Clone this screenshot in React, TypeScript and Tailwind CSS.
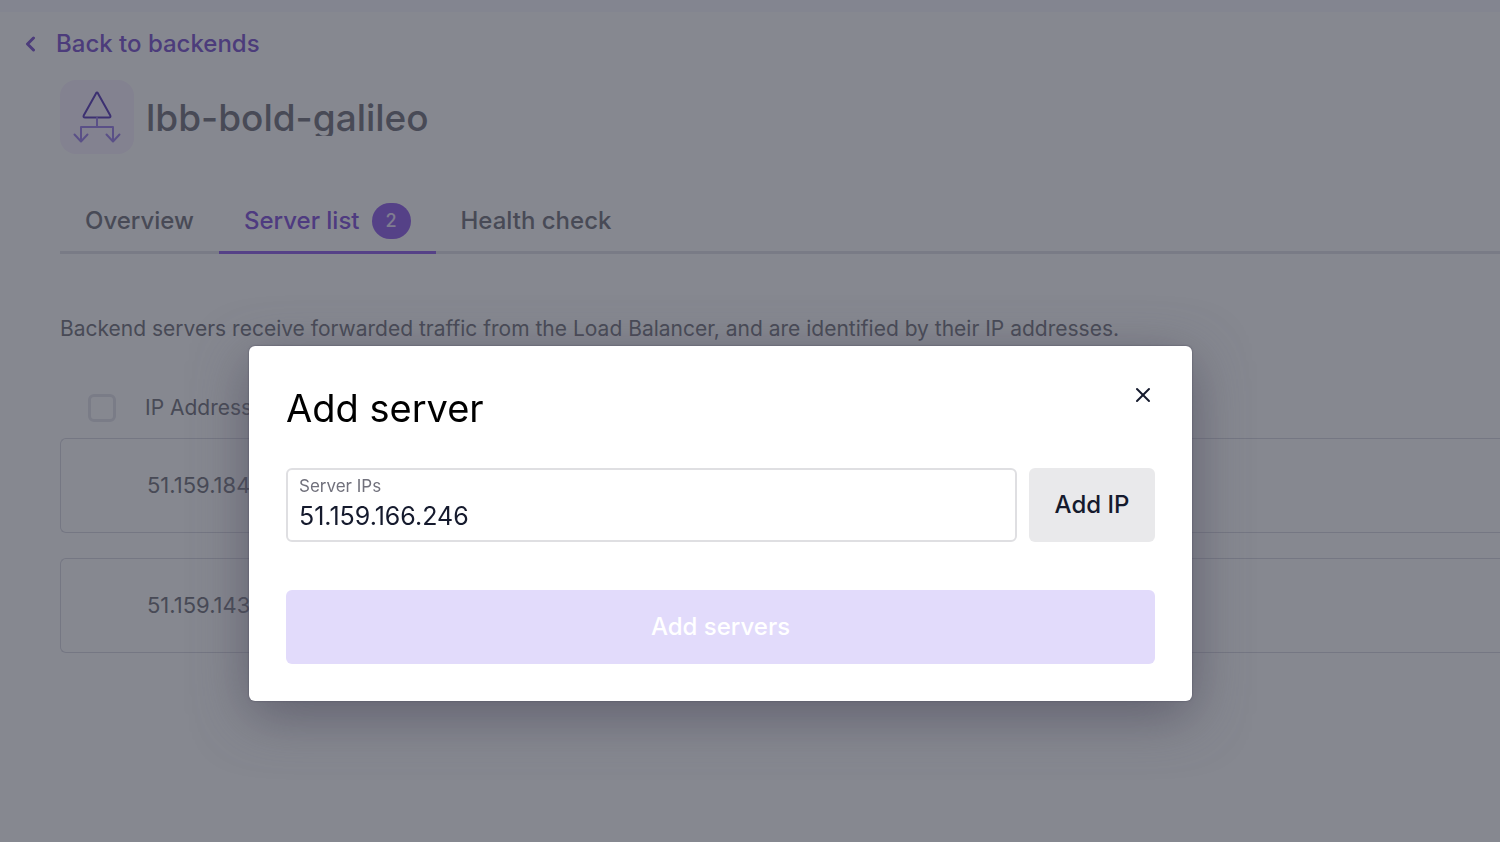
import { useState } from 'react'
import { X } from 'lucide-react'

const TABS = [
  { id: 'overview', label: 'Overview' },
  { id: 'servers', label: 'Server list', count: 2 },
  { id: 'health', label: 'Health check' },
]

const SERVERS = ['51.159.184.12', '51.159.143.87']

function LoadBalancerIcon() {
  return (
    <svg width="48" height="54" viewBox="0 0 48 54" fill="none" strokeLinecap="round" strokeLinejoin="round">
      <path d="M23 3.400 Q24 1.800 25 3.400 L37.300 25.500 Q38 27.500 36 27.500 H12 Q10 27.500 10.700 25.500 Z" stroke="#6a4fc0" strokeWidth="2" />
      <path d="M24 28 V37 M8 51 V37 H40 V51 M1.500 44.500 L8 51.500 L14.500 44.500 M33.500 44.500 L40 51.500 L46.500 44.500" stroke="#a78fec" strokeWidth="2" />
    </svg>
  )
}

function AddServerDialog({ onClose }: { onClose: () => void }) {
  const [ip, setIp] = useState('51.159.166.246')

  return (
    <div className="fixed inset-0 overflow-hidden bg-[#0d1121]/50 pt-[346px] pr-[59px]">
      <div
        role="dialog"
        aria-labelledby="add-server-title"
        className="mx-auto w-full max-w-[943px] rounded-md bg-white p-[37px] shadow-[0_14px_54px_rgba(80,78,96,0.7),0_0_2px_rgba(40,35,60,0.6)]"
      >
        <div className="flex items-start justify-between">
          <h2 id="add-server-title" className="pt-0.5 text-[38px] leading-[46px] text-black">Add server</h2>
          <button aria-label="Close" onClick={onClose} className="text-[#151a2d]">
            <X size={24} strokeWidth={2} />
          </button>
        </div>

        <div className="mt-[37px] flex gap-3">
          <div className="flex h-[74px] flex-1 flex-col rounded-md border-2 border-[#dfdfe2] px-[11px] pt-1">
            <label htmlFor="server-ips" className="text-[17px] leading-6 text-[#71717c]">Server IPs</label>
            <input
              id="server-ips"
              value={ip}
              onChange={e => setIp(e.target.value)}
              className="w-full text-[25px] leading-9 text-[#151a2d] outline-none"
            />
          </div>
          <button className="w-[126px] rounded-md bg-[#e9e9eb] text-2xl font-medium text-[#151a2d]">Add IP</button>
        </div>

        <button disabled className="mt-12 h-[74px] w-full rounded-md bg-[#e2dbfb] text-2xl font-medium text-white">
          Add servers
        </button>
      </div>
    </div>
  )
}

export default function App() {
  const [tab, setTab] = useState('servers')
  const [open, setOpen] = useState(true)

  return (
    <div className="min-h-screen overflow-hidden bg-white font-['Inter',sans-serif] text-[#83838b]">
      <div className="h-3 bg-[#f9f8ff]" />

      <a href="#backends" className="ml-6 mt-3 inline-flex h-10 items-center gap-5 text-2xl font-medium text-[#8a66d4]">
        <svg width="12" height="16" viewBox="0 0 12 16" fill="none" stroke="currentColor" strokeWidth="3" strokeLinecap="round" strokeLinejoin="round">
          <path d="M9.500 2 L3.500 8 L9.500 14" />
        </svg>
        Back to backends
      </a>

      <main className="pl-[60px]">
        <div className="mt-4 flex items-center gap-3">
          <div className="flex size-[74px] items-center justify-center rounded-2xl bg-[#f9f2ff]">
            <LoadBalancerIcon />
          </div>
          <h1 className="overflow-hidden text-[37px] font-medium leading-[37px]">lbb-bold-galileo</h1>
        </div>

        {/* Tabs */}
        <nav className="mt-9 flex border-b-[3px] border-[#e4e4ea]">
          {TABS.map(t => (
            <button
              key={t.id}
              onClick={() => setTab(t.id)}
              className={`-mb-[3px] flex h-16 items-center gap-3 border-b-[3px] px-[25px] text-2xl font-medium ${
                tab === t.id ? 'border-[#9d70ec] text-[#8f64de]' : 'border-transparent'
              }`}
            >
              {t.label}
              {t.count && (
                <span className="flex h-9 w-[39px] items-center justify-center rounded-full bg-[#9d70ec] text-lg text-[#f0e8ff]">
                  {t.count}
                </span>
              )}
            </button>
          ))}
        </nav>

        <p className="mt-[59px] whitespace-nowrap text-[21px] leading-8">
          Backend servers receive forwarded traffic from the Load Balancer, and are identified by their IP addresses.
        </p>

        {/* Server table */}
        <table className="mt-8 block text-[21px]">
          <thead className="block">
            <tr className="flex h-[61px] items-center">
              <th className="w-[85px] pl-7 text-left">
                <input
                  type="checkbox"
                  aria-label="Select all servers"
                  className="block size-7 appearance-none rounded-md border-[3px] border-[#e6e6ec]"
                />
              </th>
              <th className="font-normal">IP Address</th>
            </tr>
          </thead>
          <tbody className="flex flex-col gap-[25px] text-[22px]">
            {SERVERS.map(server => (
              <tr key={server} className="flex h-[95px] items-center rounded-l-md border border-r-0 border-[#dcdce4]">
                <td className="pl-[86px]">{server}</td>
              </tr>
            ))}
          </tbody>
        </table>
      </main>

      {open && <AddServerDialog onClose={() => setOpen(false)} />}
    </div>
  )
}
